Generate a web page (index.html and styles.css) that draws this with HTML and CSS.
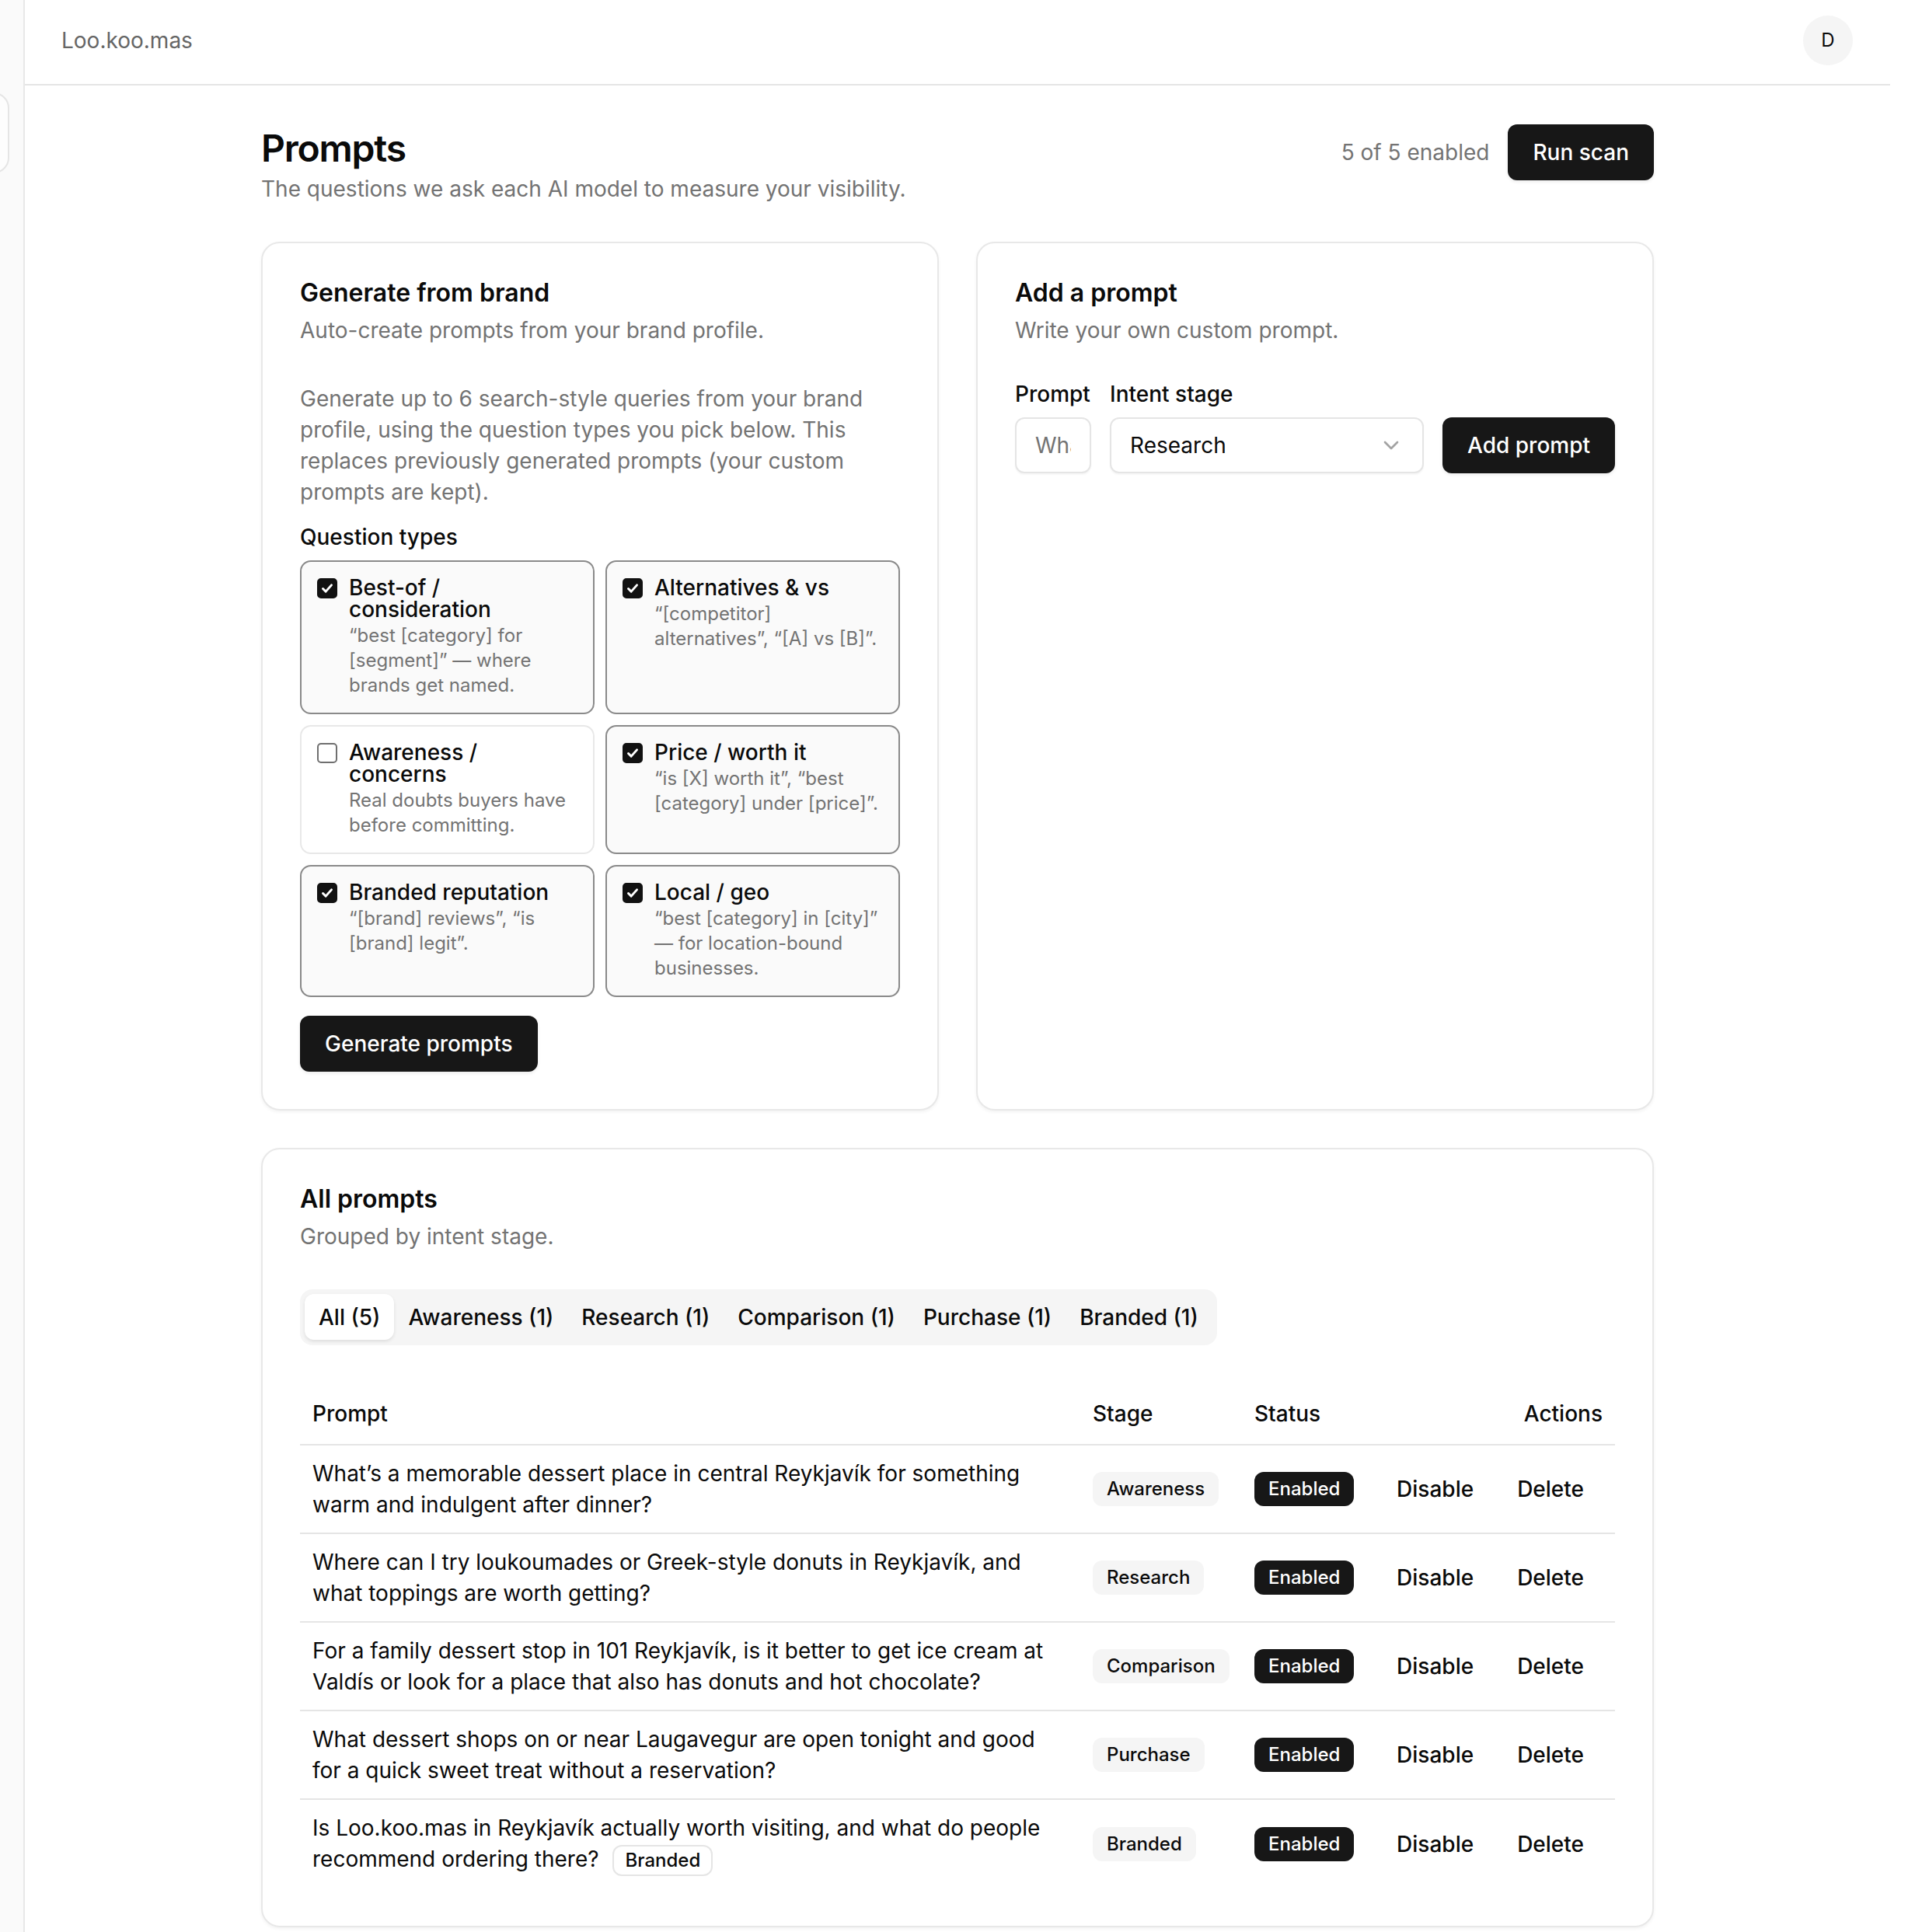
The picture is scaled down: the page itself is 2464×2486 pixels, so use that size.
FILE: index.html
```
<!DOCTYPE html>
<html lang="en">
<head>
  <meta charset="UTF-8" />
  <meta name="viewport" content="width=device-width, initial-scale=1.0" />
  <title>Prompts · Loo.koo.mas</title>
  <link rel="stylesheet" href="styles.css">
</head>
<body>
  <div class="app">
    <aside class="sidebar">
      <div class="sidebar-peek"></div>
    </aside>

    <div class="main">
      <header class="topbar">
        <span class="brand">Loo.koo.mas</span>
        <span class="avatar">D</span>
      </header>

      <main class="page">
        <div class="page-head">
          <div>
            <h1>Prompts</h1>
            <p class="muted">The questions we ask each AI model to measure your visibility.</p>
          </div>
          <div class="head-actions">
            <span class="muted">5 of 5 enabled</span>
            <button class="btn btn-primary">Run scan</button>
          </div>
        </div>

        <div class="card-row">
          <section class="card">
            <div class="card-header">
              <h2 class="card-title">Generate from brand</h2>
              <p class="card-desc">Auto-create prompts from your brand profile.</p>
            </div>
            <div class="card-body">
              <p class="muted">Generate up to 6 search-style queries from your brand profile, using the question types you pick below. This replaces previously generated prompts (your custom prompts are kept).</p>
              <div class="qtypes">
                <div class="label">Question types</div>
                <div class="qgrid">
                  <label class="qtype checked">
                    <span class="check"><svg viewBox="0 0 24 24"><path d="M6 12.5l4 4 8-9"/></svg></span>
                    <span>
                      <span class="qtype-title">Best-of / consideration</span>
                      <span class="qtype-desc">“best [category] for [segment]” — where brands get named.</span>
                    </span>
                  </label>
                  <label class="qtype checked">
                    <span class="check"><svg viewBox="0 0 24 24"><path d="M6 12.5l4 4 8-9"/></svg></span>
                    <span>
                      <span class="qtype-title">Alternatives &amp; vs</span>
                      <span class="qtype-desc">“[competitor] alternatives”, “[A] vs [B]”.</span>
                    </span>
                  </label>
                  <label class="qtype">
                    <span class="check"></span>
                    <span>
                      <span class="qtype-title">Awareness / concerns</span>
                      <span class="qtype-desc">Real doubts buyers have before committing.</span>
                    </span>
                  </label>
                  <label class="qtype checked">
                    <span class="check"><svg viewBox="0 0 24 24"><path d="M6 12.5l4 4 8-9"/></svg></span>
                    <span>
                      <span class="qtype-title">Price / worth it</span>
                      <span class="qtype-desc">“is [X] worth it”, “best [category] under [price]”.</span>
                    </span>
                  </label>
                  <label class="qtype checked">
                    <span class="check"><svg viewBox="0 0 24 24"><path d="M6 12.5l4 4 8-9"/></svg></span>
                    <span>
                      <span class="qtype-title">Branded reputation</span>
                      <span class="qtype-desc">“[brand] reviews”, “is [brand] legit”.</span>
                    </span>
                  </label>
                  <label class="qtype checked">
                    <span class="check"><svg viewBox="0 0 24 24"><path d="M6 12.5l4 4 8-9"/></svg></span>
                    <span>
                      <span class="qtype-title">Local / geo</span>
                      <span class="qtype-desc">“best [category] in [city]” — for location-bound businesses.</span>
                    </span>
                  </label>
                </div>
              </div>
              <div>
                <button class="btn btn-primary">Generate prompts</button>
              </div>
            </div>
          </section>

          <section class="card">
            <div class="card-header">
              <h2 class="card-title">Add a prompt</h2>
              <p class="card-desc">Write your own custom prompt.</p>
            </div>
            <div class="add-form">
              <div class="field field-grow">
                <label class="label" for="new-prompt">Prompt</label>
                <input class="input" id="new-prompt" type="text" placeholder="What's the best dessert near Laugavegur?">
              </div>
              <div class="field field-stage">
                <span class="label">Intent stage</span>
                <button class="select" type="button">
                  <span>Research</span>
                  <svg width="32" height="32" viewBox="0 0 24 24" fill="none" stroke="currentColor" stroke-width="2" stroke-linecap="round" stroke-linejoin="round"><path d="m6 9 6 6 6-6"/></svg>
                </button>
              </div>
              <button class="btn btn-primary">Add prompt</button>
            </div>
          </section>
        </div>

        <section class="card">
          <div class="card-header">
            <h2 class="card-title">All prompts</h2>
            <p class="card-desc">Grouped by intent stage.</p>
          </div>
          <div>
            <div class="tabs">
              <button class="tab active">All (5)</button>
              <button class="tab">Awareness (1)</button>
              <button class="tab">Research (1)</button>
              <button class="tab">Comparison (1)</button>
              <button class="tab">Purchase (1)</button>
              <button class="tab">Branded (1)</button>
            </div>

            <table class="prompts">
              <colgroup>
                <col class="col-prompt">
                <col class="col-stage">
                <col class="col-status">
                <col>
              </colgroup>
              <thead>
                <tr>
                  <th>Prompt</th>
                  <th>Stage</th>
                  <th>Status</th>
                  <th class="right">Actions</th>
                </tr>
              </thead>
              <tbody>
                <tr>
                  <td>What’s a memorable dessert place in central Reykjavík for something warm and indulgent after dinner?</td>
                  <td><span class="badge badge-muted">Awareness</span></td>
                  <td><span class="badge badge-dark">Enabled</span></td>
                  <td><div class="row-actions"><button class="ghost">Disable</button><button class="ghost">Delete</button></div></td>
                </tr>
                <tr>
                  <td>Where can I try loukoumades or Greek-style donuts in Reykjavík, and what toppings are worth getting?</td>
                  <td><span class="badge badge-muted">Research</span></td>
                  <td><span class="badge badge-dark">Enabled</span></td>
                  <td><div class="row-actions"><button class="ghost">Disable</button><button class="ghost">Delete</button></div></td>
                </tr>
                <tr>
                  <td>For a family dessert stop in 101 Reykjavík, is it better to get ice cream at Valdís or look for a place that also has donuts and hot chocolate?</td>
                  <td><span class="badge badge-muted">Comparison</span></td>
                  <td><span class="badge badge-dark">Enabled</span></td>
                  <td><div class="row-actions"><button class="ghost">Disable</button><button class="ghost">Delete</button></div></td>
                </tr>
                <tr>
                  <td>What dessert shops on or near Laugavegur are open tonight and good for a quick sweet treat without a reservation?</td>
                  <td><span class="badge badge-muted">Purchase</span></td>
                  <td><span class="badge badge-dark">Enabled</span></td>
                  <td><div class="row-actions"><button class="ghost">Disable</button><button class="ghost">Delete</button></div></td>
                </tr>
                <tr>
                  <td>Is Loo.koo.mas in Reykjavík actually worth visiting, and what do people recommend ordering there? <span class="badge badge-outline">Branded</span></td>
                  <td><span class="badge badge-muted">Branded</span></td>
                  <td><span class="badge badge-dark">Enabled</span></td>
                  <td><div class="row-actions"><button class="ghost">Disable</button><button class="ghost">Delete</button></div></td>
                </tr>
              </tbody>
            </table>
          </div>
        </section>
      </main>
    </div>

    <div class="gutter"></div>
  </div>
</body>
</html>
```

FILE: styles.css
```
* {
  box-sizing: border-box;
}

body {
  margin: 0;
  font-family: 'Inter', 'Noto Sans', sans-serif;
  font-size: 28px;
  line-height: 40px;
  color: #0a0a0a;
  background-color: #fff;
}

button,
input {
  font-family: inherit;
}

.app {
  display: flex;
  min-height: 100vh;
}

/* collapsed sidebar, only its edge shows */
.sidebar {
  width: 32px;
  flex-shrink: 0;
  background-color: #fafafa;
  border-right: 2px solid #e8e8e8;
  overflow: hidden;
}

.sidebar-peek {
  width: 52px;
  height: 104px;
  margin-top: 119px;
  margin-left: -40px;
  border: 2px solid #e5e5e5;
  border-radius: 20px;
  background-color: #fdfdfd;
}

.main {
  flex: 1;
  min-width: 0;
}

.gutter {
  width: 32px;
  flex-shrink: 0;
}

.topbar {
  height: 110px;
  display: flex;
  align-items: center;
  justify-content: space-between;
  padding: 0 48px 4px 47px;
  border-bottom: 2px solid #e5e5e5;
}

.brand {
  font-size: 28px;
  color: #666;
}

.avatar {
  width: 64px;
  height: 64px;
  border-radius: 50%;
  background-color: #f5f5f5;
  display: flex;
  align-items: center;
  justify-content: center;
  font-size: 24px;
}

.page {
  max-width: 1792px;
  margin: 0 auto;
  padding: 49px 0 48px;
  display: flex;
  flex-direction: column;
  gap: 48px;
}

.page-head {
  display: flex;
  justify-content: space-between;
  align-items: flex-start;
}

h1 {
  margin: 0;
  font-size: 48px;
  line-height: 64px;
  font-weight: 600;
  letter-spacing: -1.2px;
}

p {
  margin: 0;
}

.muted {
  color: #737373;
}

.head-actions {
  display: flex;
  align-items: center;
  gap: 24px;
  margin-top: 1px;
}

.btn {
  height: 72px;
  padding: 0 32px;
  border: none;
  border-radius: 12px;
  font-size: 28px;
  font-weight: 500;
  cursor: pointer;
}

.btn-primary {
  background-color: #171717;
  color: #fff;
  box-shadow: 0 2px 4px rgba(0, 0, 0, 0.08);
}

.card-row {
  display: grid;
  grid-template-columns: 1fr 1fr;
  gap: 48px;
}

.card {
  background-color: #fff;
  border: 2px solid #e8e8e8;
  border-radius: 24px;
  padding: 48px;
  box-shadow: 0 2px 4px rgba(0, 0, 0, 0.05);
  display: flex;
  flex-direction: column;
  gap: 48px;
}

.card-header {
  display: flex;
  flex-direction: column;
  gap: 12px;
}

.card-title {
  margin: 0;
  font-size: 32px;
  line-height: 32px;
  font-weight: 600;
}

.card-desc {
  color: #737373;
}

.card-body {
  display: flex;
  flex-direction: column;
  gap: 24px;
}

.label {
  display: block;
  font-size: 28px;
  line-height: 28px;
  font-weight: 500;
}

.qtypes {
  display: flex;
  flex-direction: column;
  gap: 16px;
}

.qgrid {
  display: grid;
  grid-template-columns: 1fr 1fr;
  gap: 14px;
}

.qtype {
  display: flex;
  gap: 15px;
  padding: 19px 22px 19px 20px;
  border: 2px solid #e8e8e8;
  border-radius: 14px;
  cursor: pointer;
}

.qtype.checked {
  border-color: #8a8a8a;
  background-color: #fafafa;
}

/* checkbox square, filled black when ticked */
.check {
  width: 26px;
  height: 26px;
  margin-top: 2px;
  flex-shrink: 0;
  border: 2px solid #6f6f6f;
  border-radius: 5px;
  background-color: #fff;
  display: flex;
  align-items: center;
  justify-content: center;
}

.qtype.checked .check {
  background-color: #111;
  border-color: #111;
}

.check svg {
  width: 22px;
  height: 22px;
  fill: none;
  stroke: #fff;
  stroke-width: 3.2;
  stroke-linecap: round;
  stroke-linejoin: round;
}

.qtype-title {
  display: block;
  font-size: 28px;
  line-height: 28px;
  font-weight: 500;
}

.qtype-desc {
  display: block;
  margin-top: 4px;
  font-size: 24px;
  line-height: 32px;
  color: #737373;
}

.add-form {
  display: flex;
  align-items: flex-end;
  gap: 24px;
}

.field {
  display: flex;
  flex-direction: column;
  gap: 16px;
}

.field-grow {
  flex: 1;
  min-width: 0;
}

.field-stage {
  width: 404px;
  flex-shrink: 0;
}

.input,
.select {
  height: 72px;
  width: 100%;
  padding: 0 24px;
  border: 2px solid #e5e5e5;
  border-radius: 12px;
  background-color: #fff;
  font-size: 28px;
  color: #0a0a0a;
  box-shadow: 0 2px 2px rgba(0, 0, 0, 0.04);
}

.input::placeholder {
  color: #737373;
}

.select {
  display: flex;
  align-items: center;
  justify-content: space-between;
  padding-right: 24px;
  text-align: left;
}

.select svg {
  color: #a3a3a3;
}

.tabs {
  display: inline-flex;
  height: 72px;
  padding: 6px;
  background-color: #f5f5f5;
  border-radius: 16px;
}

.tab {
  height: 59px;
  padding: 0 16px;
  border: 2px solid transparent;
  border-radius: 12px;
  background: none;
  font-size: 28px;
  font-weight: 500;
  color: #0a0a0a;
  cursor: pointer;
}

.tab.active {
  background-color: #fff;
  box-shadow: 0 2px 4px rgba(0, 0, 0, 0.1);
}

.prompts {
  width: 100%;
  margin-top: 48px;
  border-collapse: collapse;
  table-layout: fixed;
}

.col-prompt {
  width: 1004px;
}

.col-stage {
  width: 208px;
}

.col-status {
  width: 160px;
}

.prompts th {
  height: 80px;
  padding: 0 16px;
  text-align: left;
  font-weight: 500;
  border-bottom: 2px solid #e5e5e5;
}

.prompts th.right {
  text-align: right;
}

.prompts td {
  padding: 16px;
  vertical-align: middle;
  border-bottom: 2px solid #e5e5e5;
}

.prompts tbody tr:last-child td {
  border-bottom: none;
}

.badge {
  display: inline-flex;
  align-items: center;
  height: 44px;
  padding: 0 16px;
  border: 2px solid transparent;
  border-radius: 12px;
  font-size: 24px;
  font-weight: 500;
  vertical-align: middle;
  white-space: nowrap;
}

.badge-muted {
  background-color: #f5f5f5;
}

.badge-dark {
  background-color: #171717;
  color: #fff;
}

/* inline tag beside the prompt text, kept within the line box */
.badge-outline {
  height: 40px;
  padding: 0 14px;
  border-color: #e5e5e5;
  margin-left: 10px;
}

.row-actions {
  display: flex;
  justify-content: flex-end;
  gap: 8px;
}

.ghost {
  height: 64px;
  padding: 0 24px;
  border: none;
  border-radius: 12px;
  background: none;
  font-size: 28px;
  font-weight: 500;
  color: #0a0a0a;
  cursor: pointer;
}
```
